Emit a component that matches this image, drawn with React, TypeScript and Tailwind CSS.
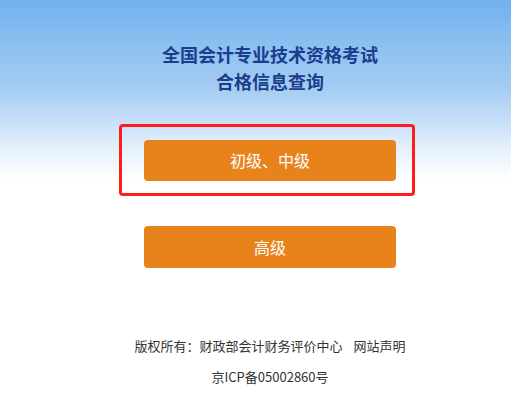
import React from "react";

export default function App() {
  return (
    <div
      className="w-full min-h-[418px] bg-white"
      style={{ fontFamily: '"Noto Sans CJK SC", "Noto Sans", sans-serif' }}
    >
      <div className="h-[418px] bg-[linear-gradient(to_bottom,#73b1ee_0px,#a6cdf3_90px,#e6f1fc_150px,#ffffff_180px)] flex flex-col items-center pl-[29px]">
        <div className="mt-[41px] text-center text-[18px] leading-[27px] font-bold text-[#1b3e8c]">
          <div>全国会计专业技术资格考试</div>
          <div>合格信息查询</div>
        </div>
        <div className="mt-[29px] mr-[6px] w-[296px] h-[72px] border-[3px] border-[#fd1d1d] rounded-[4px] flex items-center justify-center">
          <button className="ml-[6px] w-[252px] h-[41px] bg-[#e8831c] rounded-[4px] text-white text-[16px] leading-[41px] mt-[1px]">
            初级、中级
          </button>
        </div>
        <button className="mt-[30px] w-[252px] h-[42px] bg-[#e8831c] rounded-[4px] text-white text-[16px] leading-[42px]">
          高级
        </button>
        <div className="mt-[69px] text-[13px] text-[#333] text-center leading-[18px]">
          <div>
            版权所有：财政部会计财务评价中心<span className="inline-block w-[11px]" />网站声明
          </div>
          <div className="mt-[13px]">京ICP备05002860号</div>
        </div>
      </div>
    </div>
  );
}
